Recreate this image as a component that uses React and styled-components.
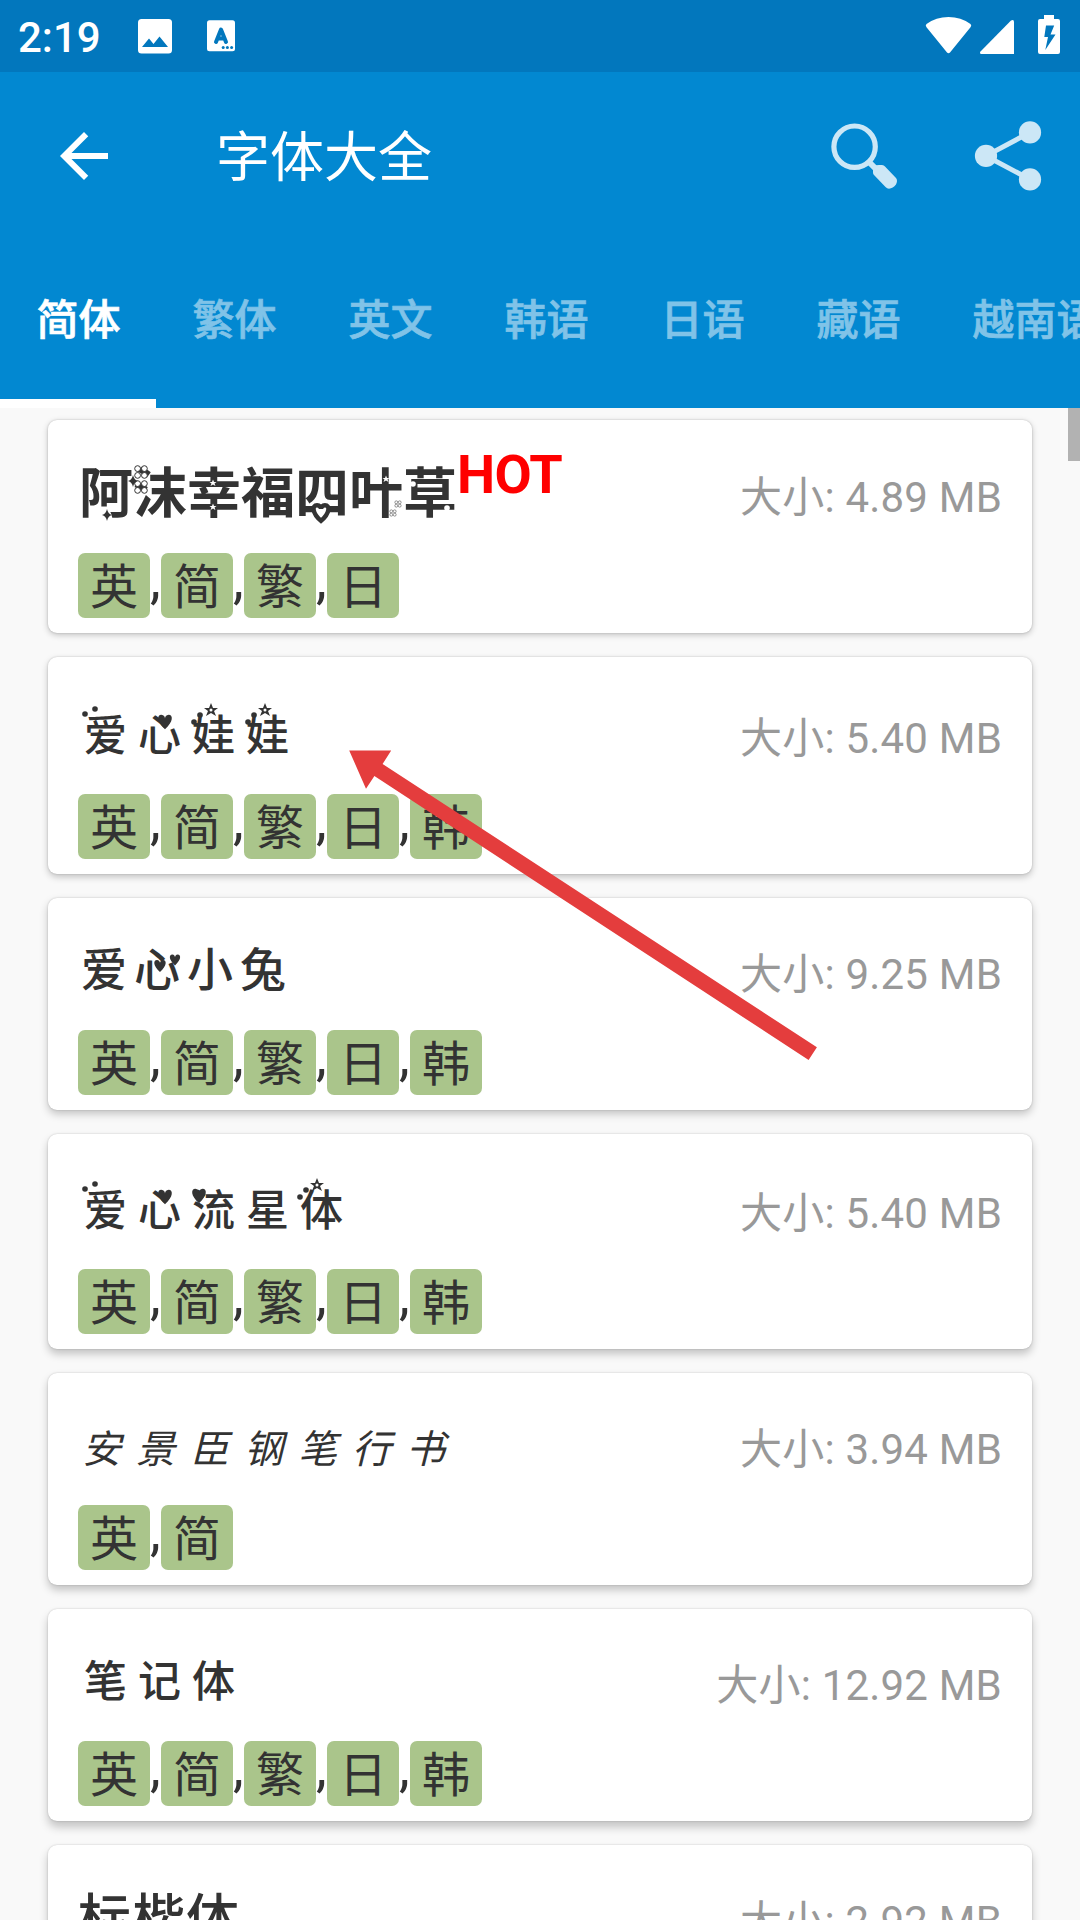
import React from "react";
import styled, { createGlobalStyle } from "styled-components";

const GlobalStyle = createGlobalStyle`
  html, body { margin: 0; padding: 0; background: #f9f9f9; }
  * { box-sizing: border-box; }
  body { font-family: Roboto, "Noto Sans CJK SC", sans-serif; }
`;

const Screen = styled.div`
  position: relative;
  display: flex;
  flex-direction: column;
  width: 1080px;
  height: 1920px;
  overflow: hidden;
  background: #f9f9f9;
`;

const StatusBar = styled.header`
  display: flex;
  justify-content: space-between;
  flex: none;
  height: 72px;
  padding: 0 18px;
  background: #0277bd;
`;

const StatusGroup = styled.div`
  display: flex;
  align-items: flex-start;
`;

const Clock = styled.span`
  width: 120px;
  padding-top: 3px;
  color: #fff;
  font-size: 42px;
  font-weight: 500;
  line-height: 70px;
`;

const Toolbar = styled.div`
  display: flex;
  align-items: center;
  flex: none;
  height: 168px;
  padding: 0 36px 0 48px;
  background: #0288d1;
`;

const Title = styled.h1`
  flex: 1;
  margin: 0 0 0 96px;
  padding-top: 6px;
  color: #fff;
  font-size: 54px;
  font-weight: 400;
  line-height: 72px;
`;

const Actions = styled.div`
  display: flex;
  gap: 72px;
`;

const Tabs = styled.nav`
  display: flex;
  flex: none;
  height: 168px;
  overflow: hidden;
  background: #0288d1;
`;

const Tab = styled.div`
  flex: none;
  height: 168px;
  padding: 1px 35.5px 0 36.5px;
  border-bottom: 9px solid ${(p) => (p.$active ? "#fff" : "transparent")};
  color: ${(p) => (p.$active ? "#fff" : "#80c3e8")};
  font-size: 42px;
  font-weight: 500;
  -webkit-text-stroke: 0.7px currentColor;
  line-height: 160px;
  white-space: nowrap;
`;

const List = styled.main`
  position: relative;
  display: flex;
  flex-direction: column;
  gap: 24px;
  flex: 1;
  min-height: 0;
  padding: 12px 48px 0;
  overflow: hidden;
`;

const ScrollThumb = styled.div`
  position: absolute;
  top: 0;
  right: 0;
  width: 12px;
  height: 53px;
  background: #b2b2b2;
`;

const Card = styled.article`
  display: flex;
  flex-direction: column;
  flex: none;
  height: ${(p) => p.$height}px;
  padding: 0 30px 15px;
  border-radius: 9px;
  background: #fff;
  box-shadow: 0 0 2px rgba(0, 0, 0, 0.2),
    0 ${(p) => p.$lift}px ${(p) => p.$lift + 4}px rgba(0, 0, 0, 0.22);
`;

const CardHead = styled.div`
  display: flex;
  align-items: flex-end;
  flex: 1;
`;

const Name = styled.h2`
  position: relative;
  margin: 0 0 ${(p) => 28 - (p.$drop || 0)}px;
  padding-left: ${(p) => p.$indent}px;
  color: #333;
  font-size: ${(p) => p.$size}px;
  font-weight: ${(p) => p.$weight};
  font-style: ${(p) => (p.$slanted ? "italic" : "normal")};
  letter-spacing: ${(p) => (p.$pitch || 54) - p.$size}px;
  line-height: 60px;
  white-space: nowrap;
`;

const Ornaments = styled.svg`
  position: absolute;
  left: 0;
  top: 0;
  overflow: visible;
`;

const Hot = styled.span`
  margin-bottom: 48px;
  color: #f00;
  font-size: 54px;
  font-weight: 700;
  letter-spacing: -0.7px;
  line-height: 60px;
`;

const Size = styled.span`
  margin: 0 0 31px auto;
  color: #999;
  font-size: 42px;
  letter-spacing: 0.2px;
  line-height: 48px;
  white-space: nowrap;
`;

const TagRow = styled.div`
  display: flex;
  flex: none;
  height: 65px;
`;

const Tag = styled.span`
  width: 72px;
  height: 65px;
  padding-top: 5px;
  border-radius: 7px;
  background: #aac58b;
  color: #333;
  font-size: 48px;
  line-height: 60px;
  text-align: center;
`;

const Comma = styled.span`
  width: 11px;
  color: #333;
  font-size: 54px;
  line-height: 54px;
`;

const Pointer = styled.svg`
  position: absolute;
  left: 349px;
  top: 750px;
`;

const HEART = "M0 6C-7 0-7-6-3-6C-1-6 0-4 0-3C0-4 1-6 3-6C7-6 7 0 0 6Z";
const STAR = "M0-7L2-2L7-2L3 1L5 6L0 3L-5 6L-3 1L-7-2L-2-2Z";
const SPARK = "M0-6Q1-1 5 0Q1 1 0 6Q-1 1-5 0Q-1-1 0-6Z";

function Ornament({ kind, x, y, s = 1, light }) {
  const at = `translate(${x} ${y}) scale(${s})`;
  const fill = light ? "#fff" : "#333";
  if (kind === "dot") return <circle cx={x} cy={y} r={2.8 * s} fill={fill} />;
  if (kind === "heart") return <path d={HEART} transform={at} fill={fill} />;
  if (kind === "ring") return <path d={HEART} transform={at} fill="#fff" stroke="#333" strokeWidth="3.4" />;
  if (kind === "spark") return <path d={SPARK} transform={at} fill={fill} />;
  if (kind === "star")
    return (
      <g transform={at}>
        <path d={STAR} fill={fill} />
        {!light && <circle r="1.5" fill="#fff" />}
      </g>
    );
  return (
    <g transform={at} fill="#fff" stroke="#333" strokeWidth="1">
      <circle cx="-3.4" cy="-3.4" r="2.9" />
      <circle cx="3.4" cy="-3.4" r="2.9" />
      <circle cx="-3.4" cy="3.4" r="2.9" />
      <circle cx="3.4" cy="3.4" r="2.9" />
    </g>
  );
}

const cluster = (x) => [
  { kind: "dot", x, y: 16 },
  { kind: "dot", x: x + 6, y: 9 },
  { kind: "star", x: x + 17, y: 4, s: 1 },
];

const fonts = [
  {
    name: "阿沫幸福四叶草", hot: true, size: "4.89 MB", tags: "英简繁日", height: 213, lift: 2,
    look: { $size: 54, $weight: 700, $indent: 1 },
    marks: [
      { kind: "clover", x: 63, y: 7 }, { kind: "clover", x: 63, y: 22 },
      { kind: "spark", x: 55, y: 16 }, { kind: "spark", x: 29, y: 50 },
      { kind: "star", x: 135, y: 18, s: 0.5, light: true }, { kind: "star", x: 135, y: 42, s: 0.5, light: true },
      { kind: "ring", x: 243, y: 48, s: 1.3 }, { kind: "star", x: 308, y: 14, s: 0.5, light: true },
      { kind: "clover", x: 320, y: 39, s: 0.5 }, { kind: "clover", x: 315, y: 48, s: 0.5 },
      { kind: "dot", x: 335, y: 19, light: true }, { kind: "dot", x: 369, y: 43, light: true },
    ],
  },
  {
    name: "爱心娃娃", size: "5.40 MB", tags: "英简繁日韩", height: 217, lift: 3,
    look: { $size: 43, $weight: 500, $indent: 6 },
    marks: [
      { kind: "dot", x: 7, y: 8 }, { kind: "dot", x: 17, y: 3 }, { kind: "heart", x: 87, y: 16, s: 1.2 },
      ...cluster(116), ...cluster(170),
    ],
  },
  {
    name: "爱心小兔", size: "9.25 MB", tags: "英简繁日韩", height: 212, lift: 4,
    look: { $size: 46, $weight: 500, $indent: 3, $drop: -2, $pitch: 53 },
    marks: [{ kind: "heart", x: 82, y: 26 }, { kind: "heart", x: 97, y: 20, s: 0.9 }],
  },
  {
    name: "爱心流星体", size: "5.40 MB", tags: "英简繁日韩", height: 215, lift: 5,
    look: { $size: 43, $weight: 500, $indent: 6 },
    marks: [
      { kind: "dot", x: 7, y: 8 }, { kind: "dot", x: 17, y: 3 },
      { kind: "heart", x: 87, y: 16, s: 1.2 }, { kind: "heart", x: 121, y: 15, s: 1.2 }, ...cluster(222),
    ],
  },
  {
    name: "安景臣钢笔行书", size: "3.94 MB", tags: "英简", height: 212, lift: 5,
    look: { $size: 39, $weight: 400, $indent: 4, $slanted: true, $drop: 3 },
  },
  {
    name: "笔记体", size: "12.92 MB", tags: "英简繁日韩", height: 212, lift: 6,
    look: { $size: 43, $weight: 500, $indent: 6, $drop: -1 },
  },
  {
    name: "标楷体", size: "2.92 MB", tags: "英简繁", height: 212, lift: 6,
    look: { $size: 53, $weight: 500, $indent: 0, $drop: 1 },
  },
];

const tabs = ["简体", "繁体", "英文", "韩语", "日语", "藏语", "越南语"];

function FontCard({ font }) {
  return (
    <Card $height={font.height} $lift={font.lift}>
      <CardHead>
        <Name {...font.look}>
          {font.name}
          {font.marks && (
            <Ornaments width="378" height="60">
              {font.marks.map((m, i) => <Ornament key={i} {...m} />)}
            </Ornaments>
          )}
        </Name>
        {font.hot && <Hot>HOT</Hot>}
        <Size>大小: {font.size}</Size>
      </CardHead>
      <TagRow>
        {[...font.tags].map((t, i) => (
          <React.Fragment key={t}>
            {i > 0 && <Comma>,</Comma>}
            <Tag>{t}</Tag>
          </React.Fragment>
        ))}
      </TagRow>
    </Card>
  );
}

export default function App() {
  return (
    <>
      <GlobalStyle />
      <Screen>
        <StatusBar>
          <StatusGroup>
            <Clock>2:19</Clock>
            <svg width="98" height="72" fill="#fff">
              <rect x="0" y="19" width="34" height="34.5" rx="3.5" />
              <path d="M4 47L11 38.5L15.5 44L21.5 36.5L30 47Z" fill="#0277bd" />
              <rect x="69" y="20.3" width="28" height="31" rx="2.5" />
              <path d="M78 42L83 29.5L88 42M80 38.5H86" fill="none" stroke="#0277bd" strokeWidth="4" strokeLinecap="round" strokeLinejoin="round" />
              <circle cx="85.2" cy="47.6" r="1.5" fill="#0277bd" />
              <circle cx="89.4" cy="47.6" r="1.5" fill="#0277bd" />
              <circle cx="93.6" cy="47.6" r="1.5" fill="#0277bd" />
            </svg>
          </StatusGroup>
          <StatusGroup>
            <svg width="137" height="72" fill="#fff">
              <path d="M1.5 24Q11 17 23.5 17T45.500 24Q47 25.500 45.500 27.300L25 52.500Q23.500 54 22 52.500L1.500 27.300Q0 25.500 1.500 24Z" />
              <path d="M55.500 51.500L86 20.500Q89 19 89 22V54H56.500Q54 53.500 55.500 51.500Z" />
              <path d="M119 15H129V19H133Q135 19 135 21V52Q135 54 133 54H115Q113 54 113 52V21Q113 19 115 19H119Z" />
              <path d="M121 25.500H129.200L125.500 34.500H130.500L120.300 50L123 37H119.300Z" fill="#0277bd" />
            </svg>
          </StatusGroup>
        </StatusBar>
        <Toolbar>
          <svg width="72" height="72" viewBox="0 0 24 24" fill="#fff">
            <path d="M20 11H7.830l5.590-5.590L12 4l-8 8 8 8 1.410-1.410L7.830 13H20v-2z" />
          </svg>
          <Title>字体大全</Title>
          <Actions>
            <svg width="72" height="72" viewBox="828 120 72 72">
              <circle cx="854.600" cy="146.700" r="20.700" fill="none" stroke="#cce7f6" strokeWidth="5.200" />
              <path d="M869.500 162.500L879 172" stroke="#cce7f6" strokeWidth="6" />
              <path d="M873 170.500Q873 165 879 165H882Q884 165 885 166.500L896 178Q898 180.500 896 184.500Q893 188.500 889 188.700Q887 188.700 885.500 187L874 175Q873 174 873 172.500Z" fill="#cce7f6" />
            </svg>
            <svg width="72" height="72" viewBox="972 120 72 72" fill="#cce7f6">
              <path d="M1030 132.400L986 155.900L1030 179.400" fill="none" stroke="#cce7f6" strokeWidth="5" />
              <circle cx="986" cy="155.900" r="11.100" />
              <circle cx="1030" cy="132.400" r="11.100" />
              <circle cx="1030" cy="179.400" r="11.100" />
            </svg>
          </Actions>
        </Toolbar>
        <Tabs>
          {tabs.map((t, i) => <Tab key={t} $active={i === 0}>{t}</Tab>)}
        </Tabs>
        <List>
          {fonts.map((f) => <FontCard key={f.name} font={f} />)}
          <ScrollThumb />
        </List>
        <Pointer width="470" height="312" viewBox="349 750 470 312">
          <path d="M349.200 750.500H391.200L382.600 764L816.900 1047.300L808.600 1060L374.400 776L366 788.700Z" fill="#e43d3d" />
        </Pointer>
      </Screen>
    </>
  );
}
